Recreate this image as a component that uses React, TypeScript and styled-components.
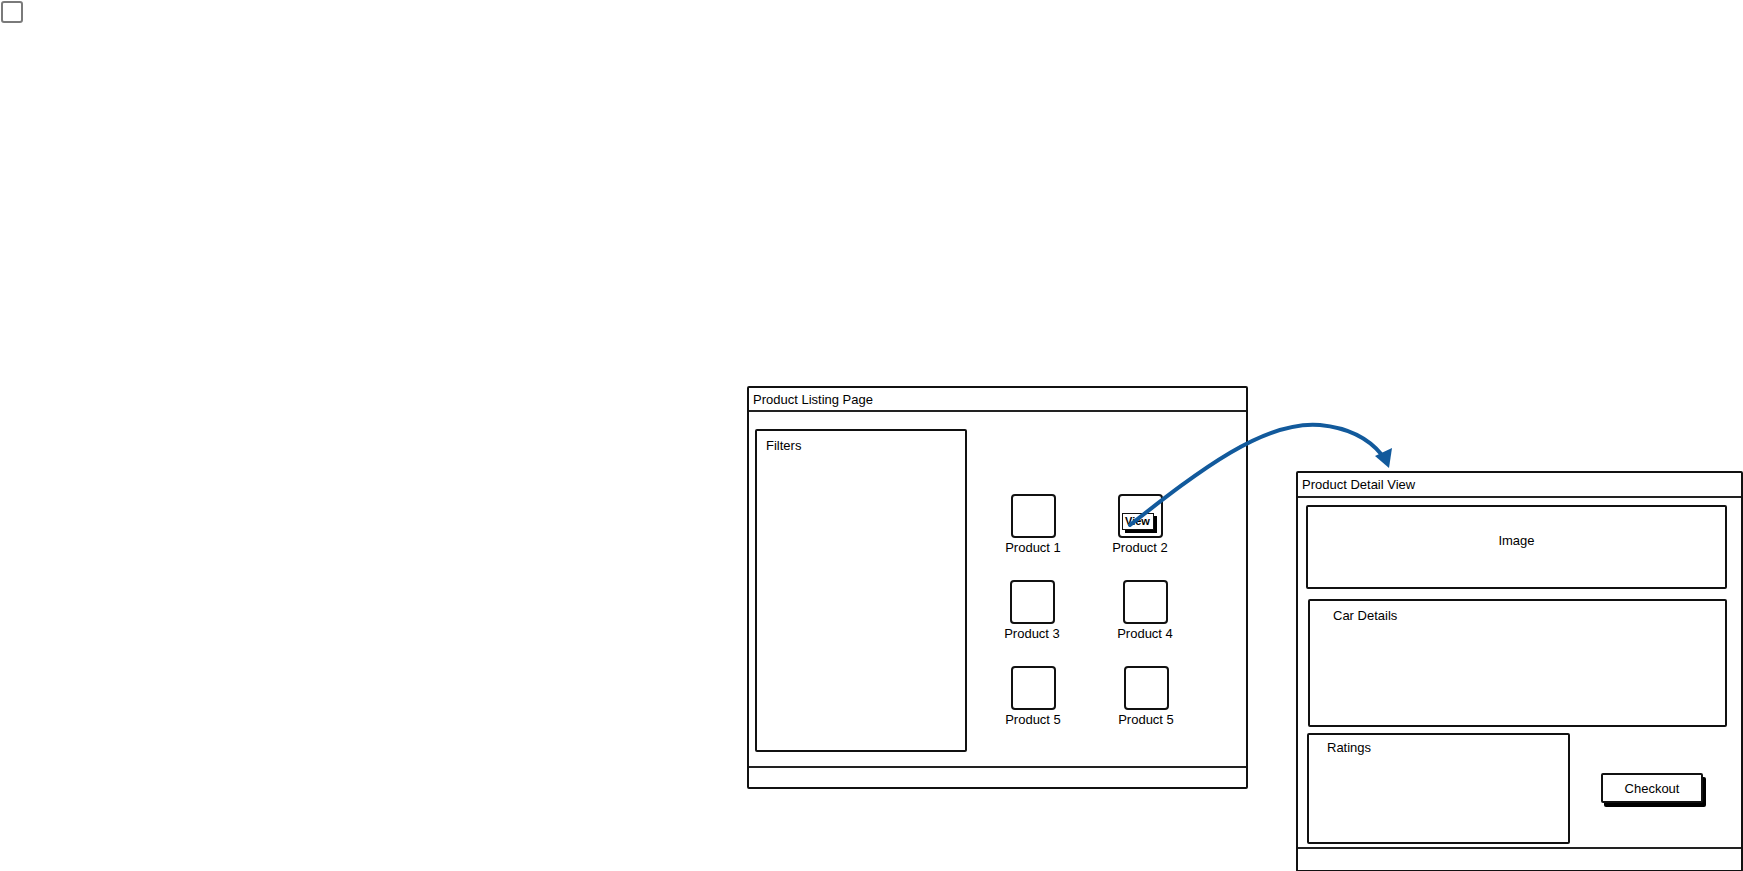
import React from "react";
import styled, { createGlobalStyle } from "styled-components";

const Global = createGlobalStyle`
  html, body { margin: 0; padding: 0; background: #ffffff; }
  body { font-family: "Liberation Sans", Arial, sans-serif; color: #000; }
  * { box-sizing: border-box; }
`;

const Canvas = styled.div`
  position: relative;
  width: 1743px;
  height: 871px;
  overflow: hidden;
  background: #fff;
`;

const Checkbox = styled.div`
  position: absolute;
  left: 1px;
  top: 1px;
  width: 22px;
  height: 22px;
  border: 2px solid #7a7a7a;
  border-radius: 3px;
  background: #fff;
`;

const Window = styled.div<{ $left: number; $top: number; $w: number; $h: number }>`
  position: absolute;
  left: ${(p) => p.$left}px;
  top: ${(p) => p.$top}px;
  width: ${(p) => p.$w}px;
  height: ${(p) => p.$h}px;
  border: 2.5px solid #111;
  border-radius: 2px;
  display: flex;
  flex-direction: column;
  background: #fff;
`;

const TitleBar = styled.div<{ $h: number }>`
  height: ${(p) => p.$h}px;
  flex: 0 0 auto;
  border-bottom: 2px solid #222;
  font-size: 13px;
  display: flex;
  align-items: center;
  padding-left: 4px;
`;

const Footer = styled.div<{ $h: number }>`
  height: ${(p) => p.$h}px;
  flex: 0 0 auto;
  border-top: 2px solid #222;
`;

const ListingBody = styled.div`
  flex: 1;
  display: flex;
  align-items: flex-start;
  padding: 17px 0 0 6px;
`;

const Panel = styled.div<{ $w: number; $h: number; $px: number; $py: number }>`
  width: ${(p) => p.$w}px;
  height: ${(p) => p.$h}px;
  flex: 0 0 auto;
  border: 2px solid #111;
  border-radius: 2px;
  padding: ${(p) => p.$py}px 0 0 ${(p) => p.$px}px;
  font-size: 13px;
  line-height: 15px;
`;

const CenterPanel = styled(Panel)`
  display: flex;
  align-items: center;
  justify-content: center;
  padding: 0 0 14px 0;
`;

const ProductGrid = styled.div`
  margin: 65px 0 0 11px;
  display: grid;
  grid-template-columns: 110px 110px;
  row-gap: 25px;
`;

const Product = styled.div<{ $shift: number }>`
  display: flex;
  flex-direction: column;
  align-items: center;
  transform: translateX(${(p) => p.$shift}px);
`;

const Thumb = styled.div`
  position: relative;
  width: 45px;
  height: 44px;
  border: 2px solid #111;
  border-radius: 4px;
`;

const ViewButton = styled.div`
  position: absolute;
  left: 2px;
  top: 17px;
  width: 32px;
  height: 17px;
  border: 1.5px solid #111;
  background: #fff;
  box-shadow: 3px 3px 0 #000;
  font-size: 11px;
  line-height: 14px;
  font-weight: bold;
  text-align: center;
`;

const Label = styled.div`
  margin-top: 2px;
  font-size: 13px;
  line-height: 15px;
  white-space: nowrap;
`;

const DetailBody = styled.div`
  flex: 1;
  display: flex;
  flex-direction: column;
  padding: 7px 0 0 8px;
`;

const Stack = styled.div<{ $gap: number; $dx: number }>`
  margin-top: ${(p) => p.$gap}px;
  margin-left: ${(p) => p.$dx}px;
  display: flex;
  align-items: flex-start;
`;

const CheckoutButton = styled.div`
  margin: 40px 0 0 31px;
  width: 102px;
  height: 30px;
  border: 2px solid #111;
  border-radius: 2px;
  box-shadow: 3px 4px 0 #000;
  font-size: 13px;
  display: flex;
  align-items: center;
  justify-content: center;
  background: #fff;
`;

const Overlay = styled.svg`
  position: absolute;
  left: 0;
  top: 0;
  pointer-events: none;
`;

const products = [
  { name: "Product 1", shift: 0, view: false },
  { name: "Product 2", shift: -3, view: true },
  { name: "Product 3", shift: -1, view: false },
  { name: "Product 4", shift: 2, view: false },
  { name: "Product 5", shift: 0, view: false },
  { name: "Product 5", shift: 3, view: false },
];

export default function App() {
  return (
    <>
      <Global />
      <Canvas>
        <Checkbox />
        <Window $left={747} $top={386} $w={501} $h={403}>
          <TitleBar $h={24}>Product Listing Page</TitleBar>
          <ListingBody>
            <Panel $w={212} $h={323} $px={9} $py={7}>
              Filters
            </Panel>
            <ProductGrid>
              {products.map((p, i) => (
                <Product key={i} $shift={p.shift}>
                  <Thumb>{p.view && <ViewButton>View</ViewButton>}</Thumb>
                  <Label>{p.name}</Label>
                </Product>
              ))}
            </ProductGrid>
          </ListingBody>
          <Footer $h={21} />
        </Window>
        <Window $left={1296} $top={471} $w={447} $h={401}>
          <TitleBar $h={25}>Product Detail View</TitleBar>
          <DetailBody>
            <CenterPanel $w={421} $h={84} $px={0} $py={0}>
              Image
            </CenterPanel>
            <Stack $gap={10} $dx={2}>
              <Panel $w={419} $h={128} $px={23} $py={7}>
                Car Details
              </Panel>
            </Stack>
            <Stack $gap={6} $dx={1}>
              <Panel $w={263} $h={111} $px={18} $py={5}>
                Ratings
              </Panel>
              <CheckoutButton>Checkout</CheckoutButton>
            </Stack>
          </DetailBody>
          <Footer $h={23} />
        </Window>
        <Overlay width={1743} height={871} viewBox="0 0 1743 871">
          <path
            d="M1130 525 C 1200 470, 1265 420, 1320 425 C 1350 428, 1370 440, 1382 455"
            fill="none"
            stroke="#125a9c"
            strokeWidth={4}
            strokeLinecap="round"
          />
          <polygon points="1375,456 1392,448 1389,468" fill="#125a9c" />
        </Overlay>
      </Canvas>
    </>
  );
}
